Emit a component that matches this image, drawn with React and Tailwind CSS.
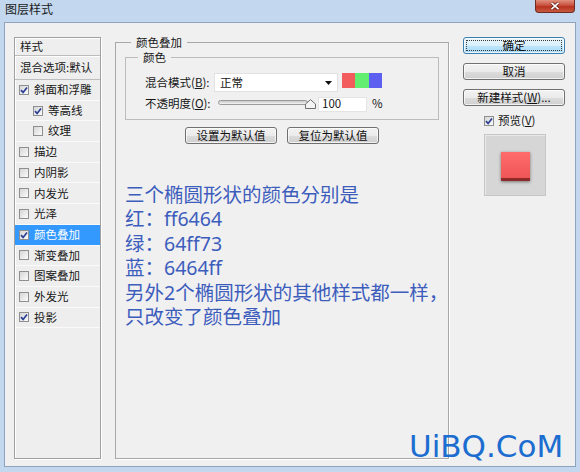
import React from "react";

const CJK = "font-['Noto_Sans_CJK_SC','Noto_Sans',sans-serif]";

function Check({ checked }) {
  return (
    <span className="flex h-[10px] w-[10px] shrink-0 items-center justify-center border border-[#8e8f8f] bg-[linear-gradient(135deg,#d6d6d6,#fbfbfb)]">
      {checked && (
        <svg width="8" height="8" viewBox="0 0 8 8">
          <path d="M1 4.2 L3.1 6.4 L7 1.4" fill="none" stroke="#2b3f94" strokeWidth="1.7" />
        </svg>
      )}
    </span>
  );
}

function Btn({ children, primary, className = "" }) {
  return (
    <div
      className={`flex h-[17px] items-center justify-center rounded-[3px] border text-[11.5px] leading-none text-[#111] shadow-[inset_0_0_0_1px_rgba(255,255,255,0.7)] ${
        primary
          ? "border-[#3c7fb1] bg-[linear-gradient(#eaf6fd_0%,#d9f0fc_50%,#bee6fd_51%,#a7d9f5_100%)]"
          : "border-[#707070] bg-[linear-gradient(#f2f2f2_0%,#ebebeb_50%,#dddddd_51%,#cfcfcf_100%)]"
      } ${className}`}
    >
      {children}
    </div>
  );
}

const items = [
  { t: "斜面和浮雕", c: true },
  { t: "等高线", c: true, i: true },
  { t: "纹理", c: false, i: true },
  { t: "描边" },
  { t: "内阴影" },
  { t: "内发光" },
  { t: "光泽" },
  { t: "颜色叠加", c: true, sel: true },
  { t: "渐变叠加" },
  { t: "图案叠加" },
  { t: "外发光" },
  { t: "投影", c: true },
];

function LeftPanel() {
  return (
    <div className="mt-[3px] flex h-[422px] w-[87px] shrink-0 flex-col border border-[#a0a0a0] bg-[#eeeeee] shadow-[1px_1px_0_#ffffff,inset_1px_1px_0_#ffffff]">
      <div className="flex h-[18px] items-center border-b border-[#bdbdbd] pl-[5px] leading-none">样式</div>
      <div className="flex h-[24px] items-center border-b border-[#bdbdbd] pl-[5px] leading-none shadow-[inset_0_1px_0_#ffffff]">
        混合选项:默认
      </div>
      {items.map((it) => (
        <div
          key={it.t}
          className={`flex h-[20.7px] items-center gap-[5px] border-b border-[#fafafa] leading-none ${
            it.i ? "pl-[18px]" : "pl-[4px]"
          } ${it.sel ? "bg-[#3399ff] text-white" : ""}`}
        >
          <Check checked={it.c} />
          <span>{it.t}</span>
        </div>
      ))}
    </div>
  );
}

function U({ children }) {
  return <span className="underline underline-offset-[1px]">{children}</span>;
}

function MainPanel() {
  return (
    <fieldset className="ml-[14px] h-[425px] w-[334px] min-w-0 shrink-0 border border-[#a8a8a8] bg-[#f0f0f0] shadow-[1px_1px_0_#ffffff]">
      <legend className="ml-[15px] bg-[#f0f0f0] px-[5px] leading-[16px]">颜色叠加</legend>
      <div className="flex flex-col px-[9px]">
        <fieldset className="min-w-0 border border-[#bcbcbc] pb-[6px]">
          <legend className="ml-[12px] px-[5px] leading-[14px]">颜色</legend>
          <div className="mt-[9px] flex h-[19px] items-center pl-[19px]">
            <span className="w-[69px] shrink-0 leading-none">
              混合模式(<U>B</U>):
            </span>
            <div className="flex h-[19px] w-[124px] items-center justify-between border border-[#e2e2e2] bg-white pl-[5px] pr-[5px] leading-none">
              <span>正常</span>
              <svg width="7" height="4" viewBox="0 0 7 4">
                <path d="M0 0 H7 L3.5 4 Z" fill="#111" />
              </svg>
            </div>
            <div className="ml-[4px] flex h-[15px] self-start">
              <span className="h-full w-[13px] bg-[#f25c5c]" />
              <span className="h-full w-[14px] bg-[#62ee71]" />
              <span className="h-full w-[13px] bg-[#5c5ff0]" />
            </div>
          </div>
          <div className="mt-[3px] flex h-[18px] items-center pl-[19px]">
            <span className="w-[72px] shrink-0 leading-none">
              不透明度(<U>O</U>):
            </span>
            <div className="relative h-[18px] w-[99px] shrink-0">
              <div className="absolute left-[1px] right-[8px] top-[5px] h-[5px] rounded-[3px] border border-[#9a9a9a] bg-[linear-gradient(#c8c8c8,#f4f4f4)]" />
              <svg className="absolute left-[88px] top-[4px]" width="11" height="10" viewBox="0 0 11 10">
                <path d="M0.5 9.5 V5 L5.5 0.7 L10.5 5 V9.5 Z" fill="#f4f4f4" stroke="#6f6f6f" />
              </svg>
            </div>
            <div className="ml-[2px] flex h-[15px] w-[49px] items-center border border-[#e4e4e4] bg-white pl-[3px] leading-none">
              100
            </div>
            <span className="ml-[5px] leading-none">%</span>
          </div>
        </fieldset>
        <div className="mt-[7px] flex justify-center gap-[10px]">
          <Btn className="w-[92px]">设置为默认值</Btn>
          <Btn className="w-[92px]">复位为默认值</Btn>
        </div>
        <div className="mt-[39px] min-w-0 whitespace-nowrap font-['Noto_Sans','Noto_Sans_CJK_SC',sans-serif] text-[19.5px] leading-[24.4px] text-[#3d5dbd]">
          <div>三个椭圆形状的颜色分别是</div>
          <div>红：ff6464</div>
          <div>绿：64ff73</div>
          <div>蓝：6464ff</div>
          <div>另外2个椭圆形状的其他样式都一样，</div>
          <div>只改变了颜色叠加</div>
        </div>
      </div>
    </fieldset>
  );
}

function RightColumn() {
  return (
    <div className="ml-[14px] mt-[3px] flex w-[102px] shrink-0 flex-col">
      <Btn primary>
        <span className="flex h-[11px] w-[96px] items-center justify-center border border-dotted border-[#3a3a3a]">确定</span>
      </Btn>
      <Btn className="mt-[9px]">取消</Btn>
      <Btn className="mt-[9px]">
        新建样式(<U>W</U>)...
      </Btn>
      <div className="mt-[7px] flex h-[16px] items-center gap-[4px] pl-[21px] leading-none">
        <Check checked />
        <span>
          预览(<U>V</U>)
        </span>
      </div>
      <div className="ml-[21px] mt-[5px] flex h-[62px] w-[62px] items-center justify-center border border-[#c6c6c6] bg-[#d6d6d6] shadow-[inset_1px_1px_0_#e8e8e8]">
        <div className="mt-[3px] h-[29px] w-[29px] border-b-[3px] border-[#8e2a2a] bg-[linear-gradient(#ff6b6b,#ef5656)] shadow-[0_1px_3px_rgba(0,0,0,0.45)]" />
      </div>
    </div>
  );
}

export default function App() {
  return (
    <div className={`relative flex h-[472px] w-[580px] flex-col overflow-hidden bg-[#c3d7ee] text-[11.5px] text-[#161616] ${CJK}`}>
      <div className="relative h-[22px] shrink-0 pl-[5px] pt-[1px] text-[12px] leading-[16px] text-[#1b1b1b]">
        图层样式
        <div className="absolute left-[535px] top-0 flex h-[13px] w-[40px] items-center justify-center rounded-b-[4px] border border-t-0 border-[#6f2b25] bg-[linear-gradient(#e0907f,#c8503f_45%,#b8321f_55%,#c65a3f)]">
          <svg width="10" height="8" viewBox="0 0 10 8">
            <path d="M1.5 0.8 L8.5 7.2 M8.5 0.8 L1.5 7.2" stroke="#5a1a14" strokeWidth="3" />
            <path d="M1.5 0.8 L8.5 7.2 M8.5 0.8 L1.5 7.2" stroke="#ffffff" strokeWidth="1.6" />
          </svg>
        </div>
      </div>
      <div className="ml-[4px] flex h-[445px] w-[572px] shrink-0 items-start border border-[#8ea3bd] bg-[#f0f0f0] pl-[9px] pt-[11px]">
        <LeftPanel />
        <MainPanel />
        <RightColumn />
      </div>
      <div className="absolute left-[409px] top-[431px] font-['DejaVu_Sans',sans-serif] text-[31px] leading-[31px] text-[#1c6dd0]">
        UiBQ.CoM
      </div>
    </div>
  );
}
